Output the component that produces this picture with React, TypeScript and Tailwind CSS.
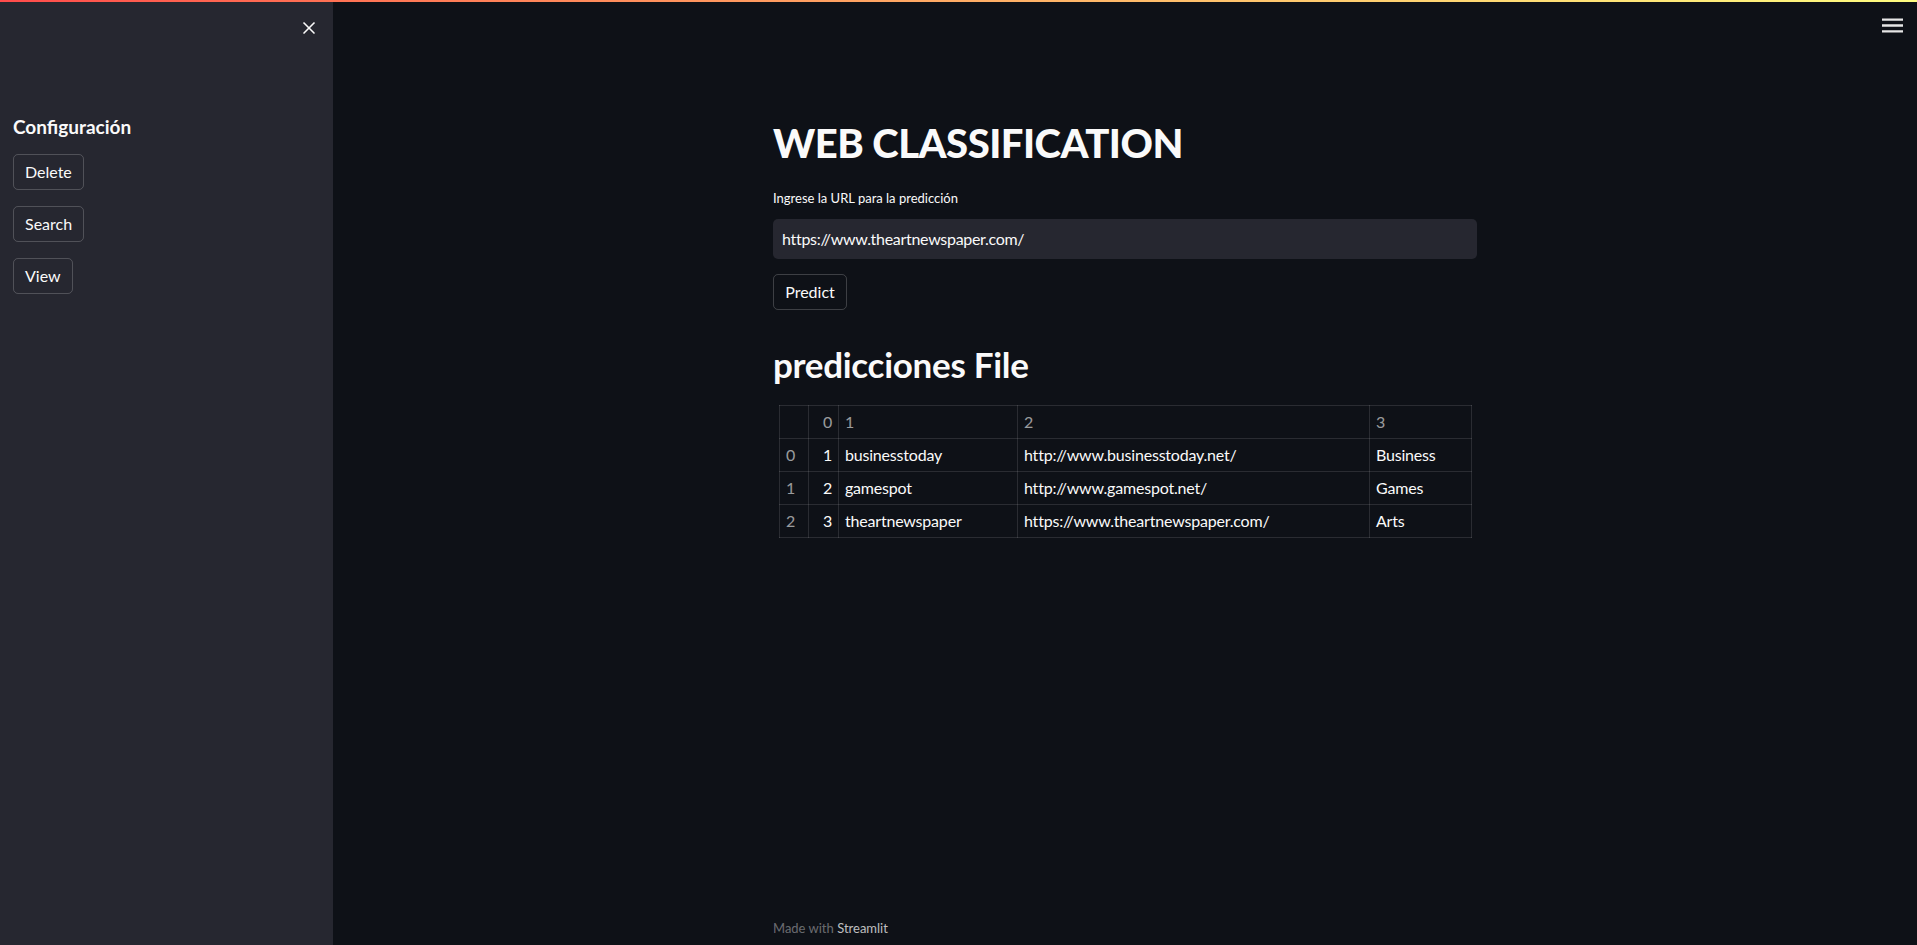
import { X } from "lucide-react";

const rows = [
  ["0", "1", "businesstoday", "http://www.businesstoday.net/", "Business"],
  ["1", "2", "gamespot", "http://www.gamespot.net/", "Games"],
  ["2", "3", "theartnewspaper", "https://www.theartnewspaper.com/", "Arts"],
];

const SideButton = ({ label }: { label: string }) => (
  <button className="h-[36px] w-fit px-[11px] rounded-[5px] border border-[rgba(250,250,250,0.2)] text-[16px] text-[#fafafa]">
    {label}
  </button>
);

const App = () => {
  return (
    <div className="w-full h-screen overflow-hidden bg-[#0e1117] font-['Lato',sans-serif] text-[#fafafa] flex flex-col">
      {/* top decoration */}
      <div className="h-[2px] w-full shrink-0 bg-gradient-to-r from-[#ff4b4b] to-[#fffd80]" />
      <div className="flex flex-1 min-h-0">
        {/* sidebar */}
        <aside className="w-[333px] shrink-0 bg-[#262730] flex flex-col px-[13px]">
          <div className="flex justify-end pt-[16px] pr-[1px]">
            <X size={20} strokeWidth={2} className="text-[#fafafa]" />
          </div>
          <h2 className="mt-[77px] text-[19px] font-bold leading-[24px]">Configuración</h2>
          <div className="flex flex-col gap-[16px] mt-[15px]">
            <SideButton label="Delete" />
            <SideButton label="Search" />
            <SideButton label="View" />
          </div>
        </aside>

        {/* main */}
        <main className="flex-1 flex flex-col relative">
          <div className="flex justify-end pt-[13px] pr-[14px]">
            <svg width="21" height="21" viewBox="3 3 18 18" className="text-[#e6e6e6]">
              <path fill="currentColor" d="M3 18h18v-2H3v2zm0-5h18v-2H3v2zm0-7v2h18V6H3z" />
            </svg>
          </div>
          <div className="w-[704px] mx-auto flex flex-col flex-1">
            <h1 className="mt-[83px] text-[40px] font-black leading-[48px] tracking-[-0.5px]">WEB CLASSIFICATION</h1>
            <label className="mt-[21px] text-[13px] leading-[20px]">Ingrese la URL para la predicción</label>
            <div className="mt-[11px] h-[40px] rounded-[5px] bg-[#262730] flex items-center px-[9px] text-[16px] tracking-[-0.3px]">
              https://www.theartnewspaper.com/
            </div>
            <button className="mt-[15px] h-[36px] w-[74px] rounded-[5px] border border-[rgba(250,250,250,0.2)] text-[16px]">
              Predict
            </button>
            <h2 className="mt-[32px] text-[35px] font-bold leading-[44px] tracking-[-0.3px]">predicciones File</h2>
            <table className="mt-[19px] ml-[6px] w-[692px] table-fixed border-collapse text-[16px] tracking-[-0.2px]">
              <colgroup>
                <col className="w-[29px]" />
                <col className="w-[30px]" />
                <col className="w-[179px]" />
                <col className="w-[352px]" />
                <col className="w-[102px]" />
              </colgroup>
              <thead>
                <tr className="h-[33px] text-[rgba(250,250,250,0.6)]">
                  <th className="border border-[rgba(250,250,250,0.12)]" />
                  <th className="border border-[rgba(250,250,250,0.12)] font-normal text-right px-[6px]">0</th>
                  <th className="border border-[rgba(250,250,250,0.12)] font-normal text-left px-[6px]">1</th>
                  <th className="border border-[rgba(250,250,250,0.12)] font-normal text-left px-[6px]">2</th>
                  <th className="border border-[rgba(250,250,250,0.12)] font-normal text-left px-[6px]">3</th>
                </tr>
              </thead>
              <tbody>
                {rows.map((r) => (
                  <tr key={r[0]} className="h-[33px]">
                    <th className="border border-[rgba(250,250,250,0.12)] font-normal text-left px-[6px] text-[rgba(250,250,250,0.6)]">{r[0]}</th>
                    <td className="border border-[rgba(250,250,250,0.12)] text-right px-[6px]">{r[1]}</td>
                    <td className="border border-[rgba(250,250,250,0.12)] px-[6px]">{r[2]}</td>
                    <td className="border border-[rgba(250,250,250,0.12)] px-[6px]">{r[3]}</td>
                    <td className="border border-[rgba(250,250,250,0.12)] px-[6px]">{r[4]}</td>
                  </tr>
                ))}
              </tbody>
            </table>
            <div className="mt-auto pb-[9px] text-[13px] leading-[16px] text-[rgba(250,250,250,0.4)]">
              Made with <span className="text-[rgba(250,250,250,0.75)]">Streamlit</span>
            </div>
          </div>
        </main>
      </div>
    </div>
  );
};

export default App;
